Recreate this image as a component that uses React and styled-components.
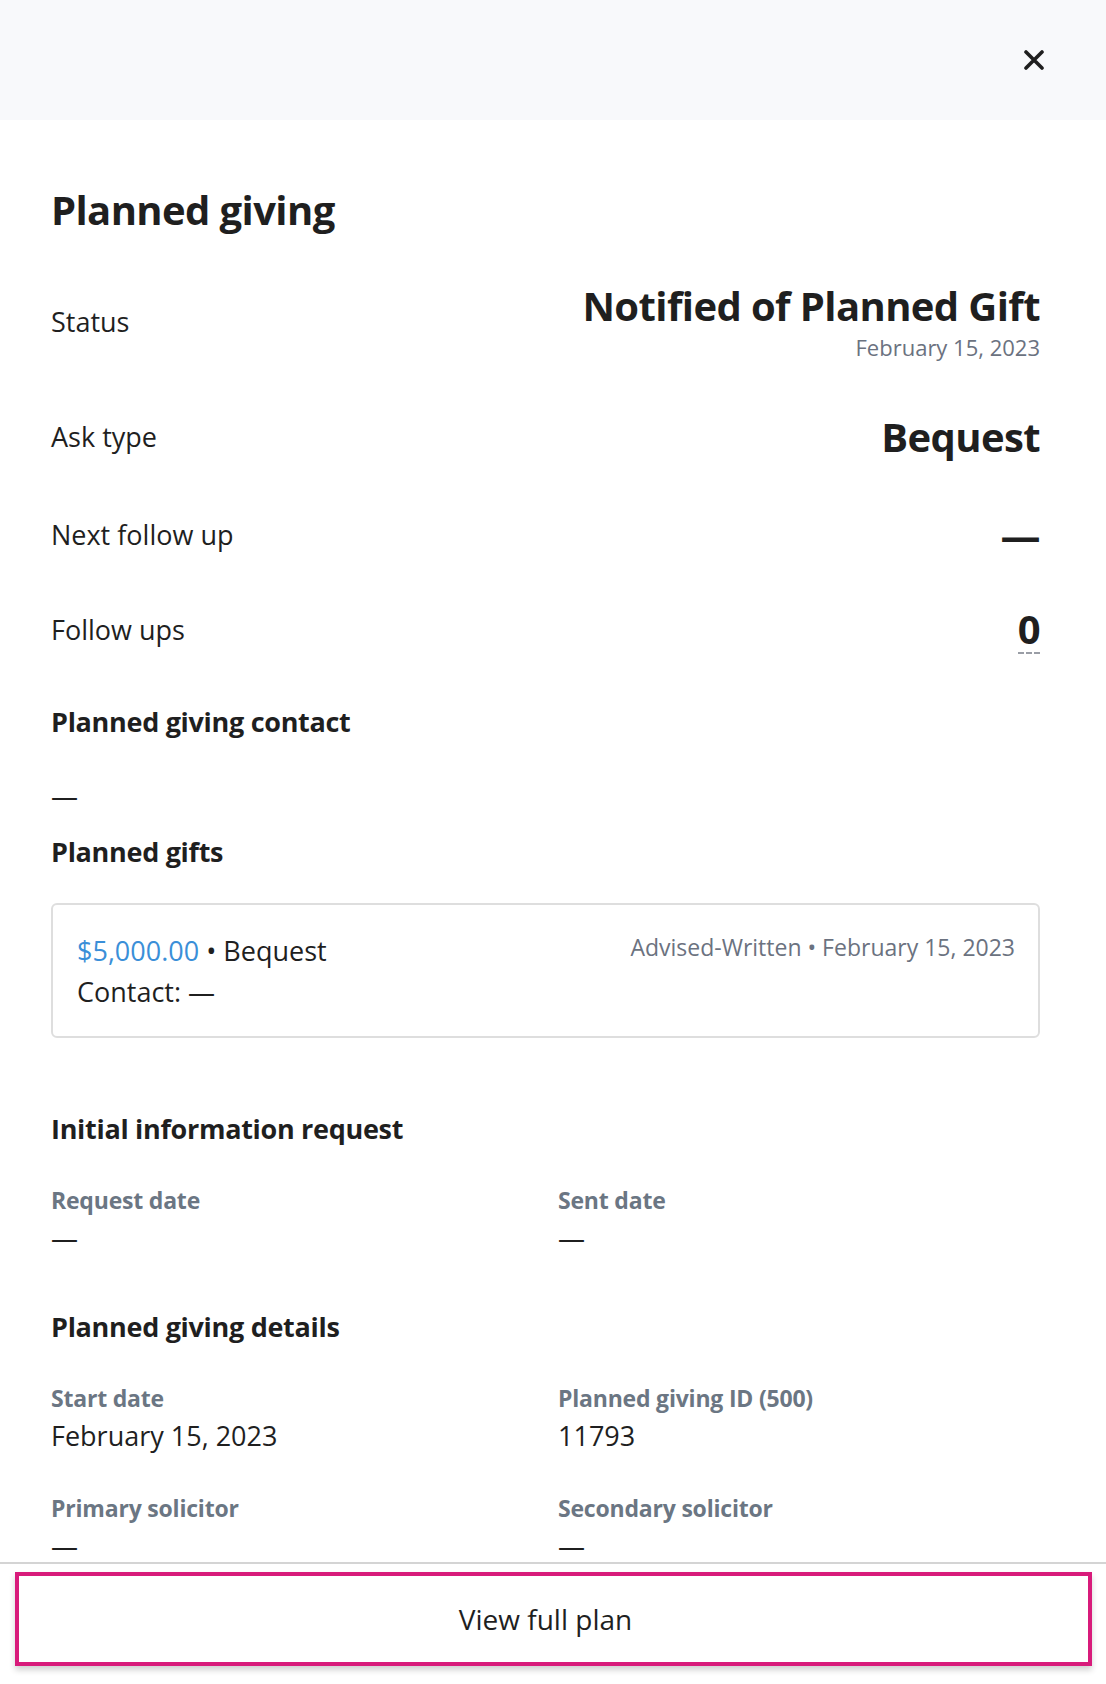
import React from "react";
import styled, { createGlobalStyle } from "styled-components";

const Global = createGlobalStyle`
  html, body { margin: 0; padding: 0; background: #ffffff; }
  body { font-family: "Open Sans", "Noto Sans", Arial, sans-serif; color: #1f1f1f; }
  * { box-sizing: border-box; }
`;

const Page = styled.div`
  width: 1106px;
  height: 100vh;
  display: flex;
  flex-direction: column;
  background: #ffffff;
  overflow: hidden;
`;

const Header = styled.header`
  height: 120px;
  flex: none;
  background: #f8f9fb;
  display: flex;
  align-items: center;
  justify-content: flex-end;
  padding-right: 62px;
`;

const CloseButton = styled.button`
  width: 20px;
  height: 20px;
  padding: 0;
  border: 0;
  background: transparent;
  display: flex;
  align-items: center;
  justify-content: center;
  cursor: pointer;
`;

const Body = styled.main`
  flex: 1;
  overflow: hidden;
  padding: 0 66px 0 51px;
`;

const Title = styled.h1`
  margin: 66px 0 0;
  font-size: 40px;
  line-height: 48px;
  font-weight: 700;
  letter-spacing: -0.6px;
`;

const Row = styled.div`
  display: flex;
  align-items: center;
  justify-content: space-between;
  margin-top: ${(p) => p.$gap}px;
`;

const RowLabel = styled.span`
  font-size: 27px;
  line-height: 36px;
  font-weight: 400;
  color: #1f1f1f;
`;

const ValueBlock = styled.div`
  display: flex;
  flex-direction: column;
  align-items: flex-end;
`;

const BigValue = styled.span`
  font-size: 40px;
  line-height: 48px;
  font-weight: 700;
  letter-spacing: -0.6px;
  color: #1f1f1f;
  ${(p) => p.$dotted && `border-bottom: 2px dashed #9a9ea6; line-height: 46px;`}
`;

const SubValue = styled.span`
  margin-top: 4px;
  font-size: 22px;
  line-height: 27px;
  color: #6b7280;
`;

const SectionTitle = styled.h2`
  margin: ${(p) => p.$gap}px 0 0;
  font-size: 27px;
  line-height: 36px;
  font-weight: 700;
  letter-spacing: -0.3px;
  color: #1f1f1f;
`;

const Plain = styled.div`
  margin-top: ${(p) => p.$gap || 0}px;
  font-size: 27px;
  line-height: 36px;
  color: #1f1f1f;
`;

const GiftCard = styled.div`
  margin-top: 33px;
  border: 2px solid #dedede;
  border-radius: 6px;
  padding: 25px 23px 24px 24px;
  display: flex;
  justify-content: space-between;
  align-items: flex-start;
`;

const GiftMain = styled.div`
  font-size: 27px;
  line-height: 41px;
  color: #1f1f1f;
`;

const Amount = styled.span`
  color: #3a8fd8;
`;

const GiftMeta = styled.div`
  font-size: 23px;
  line-height: 41px;
  color: #6b7280;
  margin-top: -3px;
`;

const FieldGrid = styled.div`
  display: grid;
  grid-template-columns: 1fr 1fr;
  column-gap: 25px;
  row-gap: 39px;
  margin-top: 38px;
`;

const Field = styled.div`
  display: flex;
  flex-direction: column;
  gap: ${(p) => p.$gap}px;
`;

const FieldLabel = styled.span`
  font-size: 23px;
  line-height: 31px;
  font-weight: 700;
  letter-spacing: -0.2px;
  color: #6b7683;
`;

const FieldValue = styled.span`
  font-size: 27px;
  line-height: 36px;
  color: #1f1f1f;
`;

const Footer = styled.footer`
  flex: none;
  border-top: 2px solid #d4d4d4;
  padding: 8px 14px 18px 15px;
  background: #ffffff;
`;

const PlanButton = styled.button`
  width: 100%;
  height: 94px;
  border: 4px solid #d81b7b;
  background: #ffffff;
  box-shadow: 0 4px 6px rgba(0, 0, 0, 0.18);
  padding: 0 16px 0 0;
  font-family: "Open Sans", "Noto Sans", Arial, sans-serif;
  font-size: 28px;
  color: #1f1f1f;
  cursor: pointer;
`;

const Dash = () => "\u2014";

export default function App() {
  return (
    <Page>
      <Global />
      <Header>
        <CloseButton aria-label="Close">
          <svg width="20" height="20" viewBox="0 0 20 20">
            <path d="M2 2 L18 18 M18 2 L2 18" stroke="#1f1f1f" strokeWidth="3.6" strokeLinecap="round" />
          </svg>
        </CloseButton>
      </Header>
      <Body>
        <Title>Planned giving</Title>

        <Row $gap={48}>
          <RowLabel>Status</RowLabel>
          <ValueBlock>
            <BigValue>Notified of Planned Gift</BigValue>
            <SubValue>February 15, 2023</SubValue>
          </ValueBlock>
        </Row>

        <Row $gap={52}>
          <RowLabel>Ask type</RowLabel>
          <BigValue>Bequest</BigValue>
        </Row>

        <Row $gap={50}>
          <RowLabel>Next follow up</RowLabel>
          <BigValue>
            <Dash />
          </BigValue>
        </Row>

        <Row $gap={47}>
          <RowLabel>Follow ups</RowLabel>
          <BigValue $dotted>0</BigValue>
        </Row>

        <SectionTitle $gap={50}>Planned giving contact</SectionTitle>
        <Plain $gap={38}>
          <Dash />
        </Plain>

        <SectionTitle $gap={20}>Planned gifts</SectionTitle>
        <GiftCard>
          <GiftMain>
            <div>
              <Amount>$5,000.00</Amount> • Bequest
            </div>
            <div>
              Contact: <Dash />
            </div>
          </GiftMain>
          <GiftMeta>Advised-Written • February 15, 2023</GiftMeta>
        </GiftCard>

        <SectionTitle $gap={73}>Initial information request</SectionTitle>
        <FieldGrid>
          <Field $gap={4}>
            <FieldLabel>Request date</FieldLabel>
            <FieldValue>
              <Dash />
            </FieldValue>
          </Field>
          <Field $gap={4}>
            <FieldLabel>Sent date</FieldLabel>
            <FieldValue>
              <Dash />
            </FieldValue>
          </Field>
        </FieldGrid>

        <SectionTitle $gap={53}>Planned giving details</SectionTitle>
        <FieldGrid>
          <Field $gap={4}>
            <FieldLabel>Start date</FieldLabel>
            <FieldValue>February 15, 2023</FieldValue>
          </Field>
          <Field $gap={4}>
            <FieldLabel>Planned giving ID (500)</FieldLabel>
            <FieldValue>11793</FieldValue>
          </Field>
          <Field $gap={4}>
            <FieldLabel>Primary solicitor</FieldLabel>
            <FieldValue>
              <Dash />
            </FieldValue>
          </Field>
          <Field $gap={4}>
            <FieldLabel>Secondary solicitor</FieldLabel>
            <FieldValue>
              <Dash />
            </FieldValue>
          </Field>
        </FieldGrid>
      </Body>
      <Footer>
        <PlanButton>View full plan</PlanButton>
      </Footer>
    </Page>
  );
}
